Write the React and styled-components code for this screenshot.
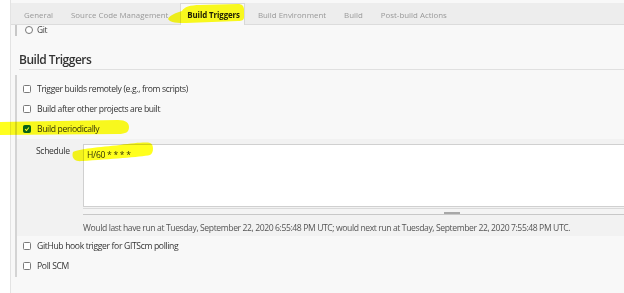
import React from "react";
import styled, { createGlobalStyle } from "styled-components";

const GlobalStyle = createGlobalStyle`
  body {
    margin: 0;
    background: #fff;
    font-family: "Open Sans", "Noto Sans", sans-serif;
    color: #333;
  }
`;

const TABS = [
  "General",
  "Source Code Management",
  "Build Triggers",
  "Build Environment",
  "Build",
  "Post-build Actions",
];

const TRIGGERS_TOP = [
  { label: "Trigger builds remotely (e.g., from scripts)" },
  { label: "Build after other projects are built" },
  { label: "Build periodically", checked: true },
];

const TRIGGERS_BOTTOM = [
  { label: "GitHub hook trigger for GITScm polling" },
  { label: "Poll SCM" },
];

// marker strokes drawn over the screenshot (page coordinates)
const MARKS = [
  {
    x: 166,
    y: 2,
    w: 80,
    h: 23,
    d: "M2 17 C4 13 10 11 16 9 C18 5 24 3 34 3 L72 2 C76 2 78 4 78 8 L78 15 C78 18 76 19 72 19 L20 21 C12 21 4 21 2 17 Z",
  },
  {
    x: 0,
    y: 119,
    w: 130,
    h: 18,
    d: "M0 3 L118 1 C126 1 129 4 129 8 C129 13 126 15 118 15 L0 16 Z",
  },
  {
    x: 70,
    y: 141,
    w: 85,
    h: 22,
    d: "M3 11 C8 8 30 6 50 4 C64 2 76 1 80 2 C84 3 84 12 80 14 C70 16 40 18 12 20 C5 21 1 17 3 11 Z",
  },
];

const App = () => {
  return (
    <Page>
      <GlobalStyle />
      <Frame>
        <TabBar>
          {TABS.map((tab) => (
            <Tab key={tab} $active={tab === "Build Triggers"}>
              {tab}
            </Tab>
          ))}
        </TabBar>

        <PrevSection>
          <PrevRow>
            <Radio />
            <span>Git</span>
          </PrevRow>
        </PrevSection>

        <Heading>Build Triggers</Heading>

        <Section>
          {TRIGGERS_TOP.map((t) => (
            <CheckRow key={t.label}>
              <Box $checked={t.checked}>
                {t.checked && (
                  <svg width="8" height="8" viewBox="0 0 8 8">
                    <path d="M1.5 4.2 L3.3 6 L6.6 2" fill="none" stroke="#fff" strokeWidth="1.4" />
                  </svg>
                )}
              </Box>
              <span>{t.label}</span>
            </CheckRow>
          ))}

          <Nested>
            <SettingRow>
              <SettingLabel>Schedule</SettingLabel>
              <FieldWrap>
                <Field>H/60 * * * *</Field>
                <ResizeBar>
                  <Grip />
                </ResizeBar>
              </FieldWrap>
            </SettingRow>
            <Description>
              Would last have run at Tuesday, September 22, 2020 6:55:48 PM UTC; would next run at
              Tuesday, September 22, 2020 7:55:48 PM UTC.
            </Description>
          </Nested>

          {TRIGGERS_BOTTOM.map((t) => (
            <CheckRow key={t.label}>
              <Box />
              <span>{t.label}</span>
            </CheckRow>
          ))}
        </Section>
      </Frame>

      {MARKS.map((m, i) => (
        <Mark key={i} $x={m.x} $y={m.y} width={m.w} height={m.h} viewBox={`0 0 ${m.w} ${m.h}`}>
          <path d={m.d} fill="#ffff1e" />
        </Mark>
      ))}
    </Page>
  );
};

const Page = styled.div`
  position: relative;
  height: 293px;
  overflow: hidden;
`;

const Frame = styled.div`
  margin-left: 10px;
  height: 293px;
  border-left: 1px solid #e3e3e3;
  background: #f8f8f8;
  overflow: hidden;
`;

const TabBar = styled.div`
  display: flex;
  margin-top: 3px;
  height: 22px;
  padding-left: 4px;
  background: #ededed;
  border-bottom: 1px solid #dcdcdc;
  box-sizing: border-box;
`;

const Tab = styled.div`
  display: flex;
  align-items: center;
  padding: ${(p) => (p.$active ? "0 4px 0 6px" : "0 8px")};
  font-size: 7.9px;
  color: ${(p) => (p.$active ? "#222" : "#999")};
  font-weight: ${(p) => (p.$active ? 700 : 400)};
  letter-spacing: ${(p) => (p.$active ? "-0.1px" : "0")};
  background: ${(p) => (p.$active ? "#f8f8f8" : "transparent")};
  border: 1px solid ${(p) => (p.$active ? "#d8d8d8" : "transparent")};
  border-bottom: none;
  margin: ${(p) => (p.$active ? "0 4px -1px 3px" : "0 0 -1px")};
  white-space: nowrap;
`;

const PrevSection = styled.div`
  height: 11px;
  margin-left: 4px;
  padding-left: 8px;
  border-left: 2px solid #c8c8c8;
  overflow: hidden;
`;

const PrevRow = styled.div`
  display: flex;
  align-items: center;
  gap: 4px;
  height: 11px;
  margin-top: -1px;
  font-size: 8.4px;
  letter-spacing: -0.3px;
  color: #444;
`;

const Radio = styled.span`
  width: 6px;
  height: 6px;
  border: 1px solid #777;
  border-radius: 50%;
  background: #fff;
`;

const Heading = styled.h2`
  margin: 16px 0 0 8px;
  padding-bottom: 1px;
  line-height: 16px;
  border-bottom: 1px solid #e0e0e0;
  font-size: 12px;
  letter-spacing: -0.5px;
  font-weight: 600;
  color: #333;
`;

const Section = styled.div`
  margin: 5px 0 0 4px;
  padding-top: 4px;
  height: 202px;
  border-left: 2px solid #d4d4d4;
  box-sizing: border-box;
`;

const CheckRow = styled.label`
  display: flex;
  align-items: center;
  gap: 6px;
  height: 20px;
  padding-left: 6px;
  font-size: 8.6px;
  letter-spacing: -0.35px;
  color: #333;
`;

const Box = styled.span`
  display: flex;
  align-items: center;
  justify-content: center;
  width: 8px;
  height: 8px;
  box-sizing: border-box;
  border: 1px solid ${(p) => (p.$checked ? "#0a62b8" : "#7a7a7a")};
  border-radius: 1.5px;
  background: ${(p) => (p.$checked ? "#0a62b8" : "#fff")};
`;

const Nested = styled.div`
  padding: 5px 0 0;
  height: 97px;
  box-sizing: border-box;
  background: #f2f2f2;
`;

const SettingRow = styled.div`
  display: flex;
  align-items: flex-start;
`;

const SettingLabel = styled.div`
  flex: none;
  width: 47px;
  margin-left: 19px;
  padding-top: 1px;
  font-size: 8.6px;
  letter-spacing: -0.35px;
  color: #333;
`;

const FieldWrap = styled.div`
  flex: none;
  width: 737px;
`;

const Field = styled.div`
  height: 63px;
  padding: 4px 3px;
  box-sizing: border-box;
  background: #fff;
  border: 1px solid #d0d0d0;
  font-size: 8.6px;
  letter-spacing: -0.3px;
  color: #333;
`;

const ResizeBar = styled.div`
  display: flex;
  justify-content: center;
  align-items: flex-end;
  height: 7px;
  margin-top: 1px;
  box-sizing: border-box;
  background: #f4f4f4;
  border-top: 1px solid #dadada;
  border-bottom: 1px solid #c8c8c8;
`;

const Grip = styled.div`
  width: 16px;
  height: 2px;
  background: #a8a8a8;
`;

const Description = styled.div`
  margin: 7px 0 0 66px;
  font-size: 8.6px;
  letter-spacing: -0.4px;
  color: #555;
  white-space: nowrap;
`;

const Mark = styled.svg`
  position: absolute;
  left: ${(p) => p.$x}px;
  top: ${(p) => p.$y}px;
  mix-blend-mode: multiply;
  pointer-events: none;
`;

export default App;
